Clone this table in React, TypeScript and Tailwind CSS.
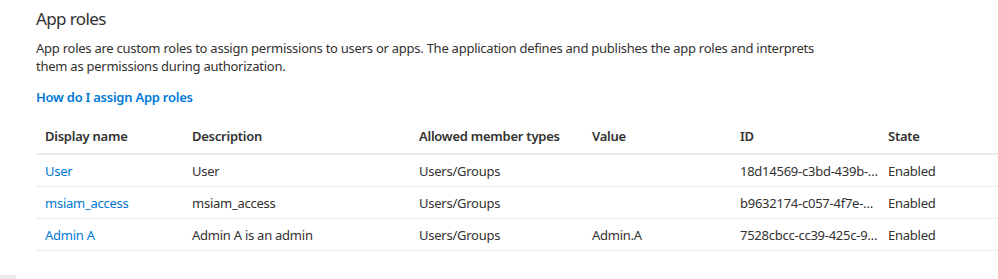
import React from 'react'

const rows = [
  { name: 'User', desc: 'User', types: 'Users/Groups', value: '', id: '18d14569-c3bd-439b-9a66-259e1ab1b5e3', state: 'Enabled' },
  { name: 'msiam_access', desc: 'msiam_access', types: 'Users/Groups', value: '', id: 'b9632174-c057-4f7e-951b-be3adc52bfe6', state: 'Enabled' },
  { name: 'Admin A', desc: 'Admin A is an admin', types: 'Users/Groups', value: 'Admin.A', id: '7528cbcc-cc39-425c-9a5c-4f2c1b8c7d21', state: 'Enabled' },
]

const cols = 'grid grid-cols-[147px_227px_173px_148px_148px_1fr]'

const App = () => {
  return (
    <div className="relative h-[279px] w-[998px] overflow-hidden bg-white font-['Noto_Sans',sans-serif] tracking-[-0.25px] text-[#323130]">
      <div className="pl-[36px] pt-[7px]">
        <p className="text-[17px] leading-[24px] tracking-[-0.6px]">App roles</p>
        <p className="mt-[8px] w-[800px] text-[13px] leading-[18px]">
          App roles are custom roles to assign permissions to users or apps. The application defines and publishes the app roles and interprets
          them as permissions during authorization.
        </p>
        <a className="mt-[13px] block text-[13px] font-semibold leading-[18px] text-[#0078d4]">How do I assign App roles</a>

        <div className="mt-[14px] text-[13px]">
          <div className={`${cols} h-[35px] items-center border-b-2 border-[#edebe9] pt-[1px] font-semibold`}>
            <div className="pl-[9px]">Display name</div>
            <div className="pl-[9px]">Description</div>
            <div className="pl-[9px]">Allowed member types</div>
            <div className="pl-[9px]">Value</div>
            <div className="pl-[9px]">ID</div>
            <div className="pl-[9px]">State</div>
          </div>
          {rows.map((r) => (
            <div key={r.name} className={`${cols} h-[32px] items-center border-b border-[#edebe9] pt-[2px]`}>
              <div className="pl-[9px] text-[#0078d4]">{r.name}</div>
              <div className="pl-[9px]">{r.desc}</div>
              <div className="pl-[9px]">{r.types}</div>
              <div className="pl-[9px]">{r.value}</div>
              <div className="truncate pl-[9px]">{r.id}</div>
              <div className="pl-[9px]">{r.state}</div>
            </div>
          ))}
        </div>
      </div>
      <div className="absolute bottom-0 left-0 h-[4px] w-[16px] bg-[#edebe9]" />
    </div>
  )
}

export default App
